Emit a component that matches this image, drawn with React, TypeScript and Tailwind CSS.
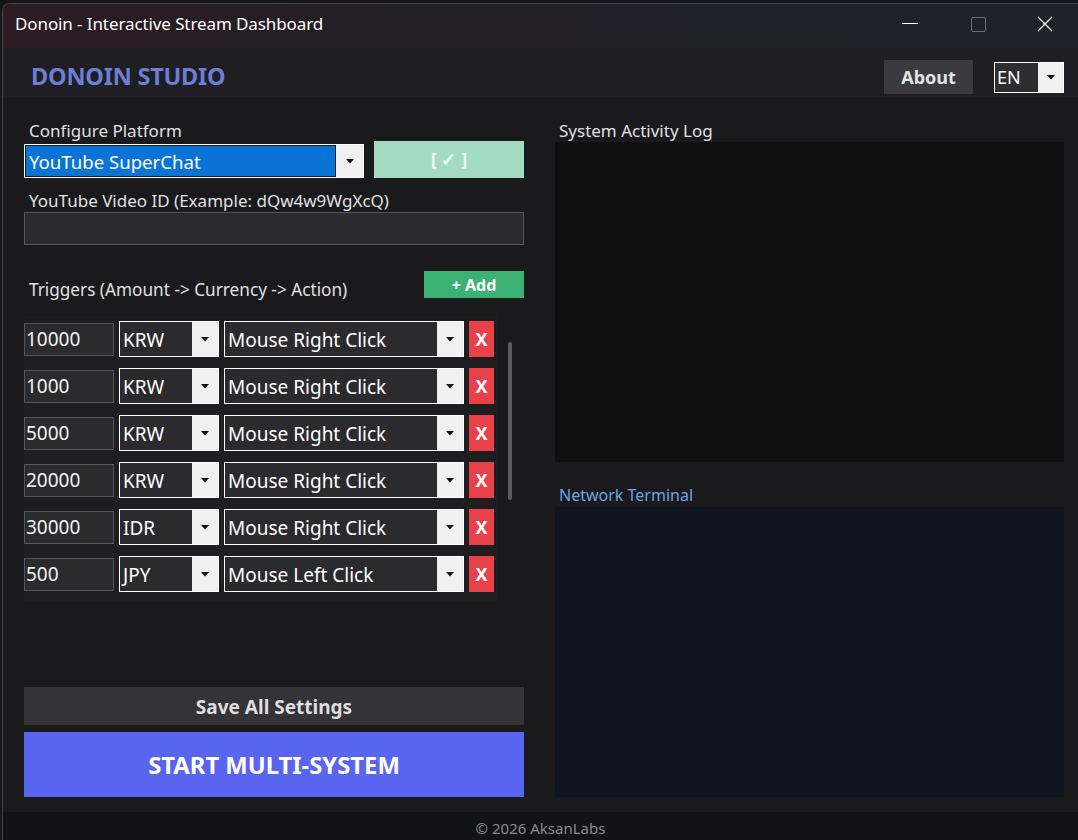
import React from "react";

function Arrow() {
  return (
    <svg width="8" height="5" viewBox="0 0 8 5">
      <path d="M0 0h8L4 4.5z" fill="#111" />
    </svg>
  );
}

function Select({
  text,
  w,
  btn,
  h,
  left = "bg-[#2b2b2e]",
}: {
  text: string;
  w: string;
  btn: string;
  h: string;
  left?: string;
}) {
  return (
    <div className={`${w} ${h} flex border border-white shrink-0`}>
      <div className={`flex-1 flex items-center pl-[3px] pt-[2px] text-white text-[19px] leading-none ${left}`}>
        {text}
      </div>
      <div className={`${btn} bg-[#f0f0f0] flex items-center justify-center`}>
        <Arrow />
      </div>
    </div>
  );
}

const rows: [string, string, string][] = [
  ["10000", "KRW", "Mouse Right Click"],
  ["1000", "KRW", "Mouse Right Click"],
  ["5000", "KRW", "Mouse Right Click"],
  ["20000", "KRW", "Mouse Right Click"],
  ["30000", "IDR", "Mouse Right Click"],
  ["500", "JPY", "Mouse Left Click"],
];

export default function App() {
  return (
    <div className="h-[840px] w-[1078px] overflow-hidden bg-[#15161a] pl-[2px] pt-[3px] font-['Noto_Sans',sans-serif]">
      <div className="h-[900px] flex flex-col border-l border-t border-[#45454a] rounded-tl-[8px] overflow-hidden bg-[#1a1a1d]">
        {/* Title bar */}
        <div className="h-[44px] shrink-0 flex items-center pb-[4px] bg-gradient-to-r from-[#2b1c22] via-[#221f27] to-[#1c232b]">
          <div className="pl-[12px] text-[17px] text-white tracking-[-0.1px]">
            Donoin - Interactive Stream Dashboard
          </div>
          <div className="ml-auto flex items-center">
            <div className="w-[69px] flex justify-center">
              <svg width="16" height="2" viewBox="0 0 16 2">
                <rect width="16" height="1" fill="#ffffff" />
              </svg>
            </div>
            <div className="w-[68px] flex justify-center">
              <svg width="15" height="15" viewBox="0 0 15 15">
                <rect x="0.5" y="0.5" width="14" height="14" rx="1.5" fill="none" stroke="#6b6e73" />
              </svg>
            </div>
            <div className="w-[66px] flex justify-center">
              <svg width="16" height="16" viewBox="0 0 16 16">
                <path d="M1 1L15 15M15 1L1 15" stroke="#ffffff" strokeWidth="1.3" />
              </svg>
            </div>
          </div>
        </div>

        {/* Header */}
        <div className="h-[49px] shrink-0 flex items-center pt-[9px] bg-[#1f1e22]">
          <div className="pl-[28px] text-[23.5px] font-bold text-[#6b7fd4] tracking-[-0.2px]">DONOIN STUDIO</div>
          <div className="ml-auto flex items-center">
            <div className="w-[89px] h-[34px] bg-[#3a3a40] flex items-center justify-center text-[18px] font-bold text-[#e4e4e4]">
              About
            </div>
            <div className="ml-[21px] mr-[14px] w-[70px] h-[31px] flex border border-white">
              <div className="flex-1 bg-[#2e2e31] flex items-center pl-[2px] text-[18px] text-white leading-none">EN</div>
              <div className="w-[25px] bg-[#f0f0f0] flex items-center justify-center">
                <Arrow />
              </div>
            </div>
          </div>
        </div>

        {/* Main */}
        <div className="h-[715px] shrink-0 flex pl-[21px] pt-[23px] bg-[#1a1a1d]">
          {/* Left */}
          <div className="w-[500px] flex flex-col">
            <div className="h-[22px] pl-[5px] text-[17px] leading-[22px] text-[#e0e0e0]">Configure Platform</div>
            <div className="flex items-end justify-between h-[36px] mt-[0px]">
              <div className="w-[340px] h-[34px] flex border border-white">
                <div className="flex-1 bg-[#0a74d6] border border-[#1a1a1d] flex items-center pl-[3px] pt-[2px] text-white text-[18.6px] leading-none">
                  YouTube SuperChat
                </div>
                <div className="w-[27px] bg-[#f0f0f0] flex items-center justify-center">
                  <Arrow />
                </div>
              </div>
              <div className="w-[150px] h-[37px] bg-[#a2dbbf] flex items-center justify-center text-[18px] font-bold text-[#eef8f3]">
                [ ✓ ]
              </div>
            </div>
            <div className="mt-[12px] h-[22px] pl-[5px] text-[17px] leading-[22px] text-[#e0e0e0]">
              YouTube Video ID (Example: dQw4w9WgXcQ)
            </div>
            <div className="h-[33px] bg-[#2b2b2e] border border-[#56565a]" />

            <div className="mt-[26px] h-[30px] flex justify-between">
              <div className="self-end pl-[5px] text-[17.2px] leading-[22px] text-[#e0e0e0]">
                Triggers (Amount -&gt; Currency -&gt; Action)
              </div>
              <div className="self-start w-[100px] h-[27px] bg-[#3bb173] flex items-center justify-center text-[16px] font-bold text-white">
                + Add
              </div>
            </div>

            <div className="mt-[15px] h-[286px] flex">
              <div className="w-[473px] h-full bg-[#1e1e21] pt-[5px] flex flex-col gap-[11px]">
                {rows.map(([amt, cur, act], i) => (
                  <div key={i} className="h-[36px] flex items-center gap-[5px]">
                    <div className="w-[90px] h-[33px] shrink-0 bg-[#2b2b2e] border border-[#56565a] flex items-center pl-[1px] text-[19px] leading-none text-[#f2f2f2]">
                      {amt}
                    </div>
                    <Select text={cur} w="w-[100px]" btn="w-[26px]" h="h-[36px]" />
                    <Select text={act} w="w-[240px]" btn="w-[26px]" h="h-[36px]" />
                    <div className="w-[25px] h-[36px] shrink-0 bg-[#e8414a] flex items-center justify-center text-[18px] font-bold text-white">
                      X
                    </div>
                  </div>
                ))}
              </div>
              <div className="ml-[11px] w-[5px] flex flex-col">
                <div className="mt-[26px] h-[158px] w-[4px] rounded-full bg-[#5b5b60]" />
              </div>
            </div>

            <div className="mt-[85px] h-[38px] bg-[#333338] flex items-center justify-center pt-[3px] text-[19px] font-bold text-[#dedede]">
              Save All Settings
            </div>
            <div className="mt-[7px] h-[65px] bg-[#5964ef] flex items-center justify-center pt-[3px] text-[23.8px] font-bold text-white">
              START MULTI-SYSTEM
            </div>
          </div>

          {/* Right */}
          <div className="ml-[31px] w-[509px] flex flex-col">
            <div className="h-[22px] pl-[4px] text-[17px] leading-[22px] text-[#e0e0e0]">System Activity Log</div>
            <div className="h-[320px] bg-[#0f0f10]" />
            <div className="mt-[22px] h-[22px] pl-[4px] text-[16px] leading-[22px] text-[#6ea3e6]">Network Terminal</div>
            <div className="mt-[1px] h-[290px] bg-[#0e1420]" />
          </div>
        </div>

        {/* Footer */}
        <div className="h-[40px] shrink-0 bg-[#131315] flex justify-center pt-[5px] text-[15px] text-[#8a8a8e]">
          © 2026 AksanLabs
        </div>
      </div>
    </div>
  );
}
